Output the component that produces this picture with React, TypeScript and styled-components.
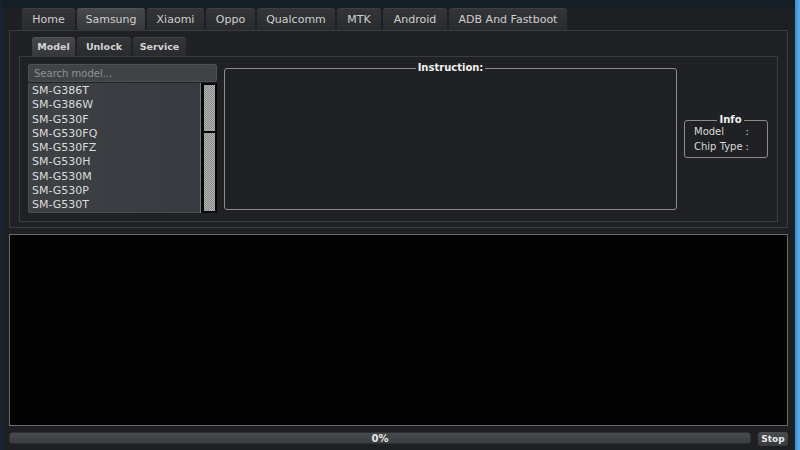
import React from 'react';
import styled, { createGlobalStyle, css } from 'styled-components';

const GlobalStyle = createGlobalStyle`
  html, body {
    margin: 0;
    padding: 0;
    background: #1e1f22;
  }
  * { box-sizing: border-box; }
`;

const uiFont = css`
  font-family: "DejaVu Sans", Verdana, sans-serif;
`;

const Window = styled.div`
  ${uiFont}
  width: 800px;
  height: 450px;
  display: flex;
  overflow: hidden;
  background: #1e1f22;
`;

const Body = styled.div`
  flex: 1;
  display: flex;
  flex-direction: column;
  border-left: 3px solid #172330;
  border-top: 8px solid #151d26;
  padding: 0 7px 0 6px;
`;

const RightEdge = styled.div`
  width: 6px;
  background: linear-gradient(90deg, #3a8fd0, #5aaee8);
`;

const TabBar = styled.div`
  display: flex;
  gap: 2px;
  height: 22px;
  margin-left: 13px;
`;

const Tab = styled.div<{ $active?: boolean; $w: number }>`
  width: ${p => p.$w}px;
  display: flex;
  align-items: center;
  justify-content: center;
  white-space: nowrap;
  font-size: 11px;
  color: #cfcfcf;
  border-radius: 3px 3px 0 0;
  background: ${p => (p.$active
    ? 'linear-gradient(#48494c, #36373a)'
    : 'linear-gradient(#343538, #2a2b2e)')};
  box-shadow: inset 0 1px 0 rgba(255, 255, 255, 0.06);
`;

const MainPanel = styled.div`
  height: 198px;
  border: 1px solid #3a3b3e;
  background: #202124;
  padding: 6px 9px 5px 9px;
  display: flex;
  flex-direction: column;
`;

const SubTabBar = styled.div`
  display: flex;
  gap: 2px;
  height: 19px;
  margin-left: 13px;
`;

const SubTab = styled(Tab)`
  font-size: 9.5px;
  font-weight: bold;
  color: #d4d4d4;
`;

const InnerPanel = styled.div`
  flex: 1;
  border: 1px solid #3a3b3e;
  padding: 7px 9px 8px 8px;
  display: flex;
  align-items: flex-start;
  gap: 7px;
`;

const LeftColumn = styled.div`
  width: 189px;
  display: flex;
  flex-direction: column;
  gap: 1px;
`;

const Search = styled.input`
  ${uiFont}
  height: 18px;
  font-size: 10px;
  color: #ddd;
  padding: 0 5px;
  background: #404346;
  border: 1px solid #4d5054;
  border-radius: 2px;
  outline: none;
  &::placeholder { color: #8d9195; }
`;

const ListBox = styled.div`
  height: 130px;
  display: flex;
`;

const List = styled.div`
  flex: 1;
  padding: 1px 0 0 3px;
  background: linear-gradient(90deg, #3d4044, #373a3e);
  border-radius: 0 0 0 2px;
  border-left: 1px solid #4a4d51;
  border-bottom: 1px solid #4a4d51;
`;

const Item = styled.div`
  font-size: 11px;
  line-height: 14.25px;
  color: #dcdcdc;
`;

const ScrollTrack = styled.div`
  width: 17px;
  background: #050505;
  padding: 2px 2px 2px 3px;
  display: flex;
  flex-direction: column;
  border-left: 1px solid #777;
`;

const Thumb = styled.div<{ $grow: number }>`
  flex: ${p => p.$grow};
  background: repeating-conic-gradient(#8a8a8a 0 25%, #b4b4b4 0 50%) 0 0 / 2px 2px;
  & + & { margin-top: 2px; }
`;

const GroupBox = styled.fieldset<{ $w: number; $h: number }>`
  width: ${p => p.$w}px;
  height: ${p => p.$h}px;
  margin: 0;
  padding: 0 9px;
  border: 1px solid #8c8c8c;
  border-radius: 3px;
  min-width: 0;
`;

const Legend = styled.legend`
  margin: 0 auto;
  padding: 0 2px;
  font-size: 10px;
  font-weight: bold;
  color: #f2f2f2;
  line-height: 10px;
`;

const InstructionBox = styled(GroupBox)`
  margin-top: -1px;
`;

const InfoBox = styled(GroupBox)`
  margin-top: 51px;
  padding: 0 0 0 9px;
`;

const InfoGrid = styled.div`
  display: grid;
  grid-template-columns: max-content max-content;
  column-gap: 3px;
  row-gap: 1px;
  white-space: nowrap;
  font-size: 10px;
  line-height: 14px;
  color: #dadada;
`;

const Log = styled.div`
  height: 192px;
  margin-top: 6px;
  background: #030303;
  border: 1px solid #6a6a6a;
`;

const BottomRow = styled.div`
  display: flex;
  align-items: flex-start;
  gap: 7px;
  margin-top: 6px;
`;

const Progress = styled.div`
  flex: 1;
  height: 12px;
  border-radius: 3px;
  background: linear-gradient(#474a4e, #3a3d41);
  border: 1px solid #2e3033;
  display: flex;
  align-items: center;
  justify-content: center;
  font-size: 10px;
  font-weight: bold;
  color: #e6e6e6;
`;

const StopButton = styled.button`
  ${uiFont}
  width: 30px;
  height: 14px;
  padding: 0;
  font-size: 9px;
  font-weight: bold;
  color: #e8e8e8;
  background: linear-gradient(#4a4c50, #37393c);
  border: none;
  border-radius: 3px;
`;

const tabs: [string, number][] = [
  ['Home', 53], ['Samsung', 68], ['Xiaomi', 57], ['Oppo', 49],
  ['Qualcomm', 78], ['MTK', 44], ['Android', 64], ['ADB And Fastboot', 118],
];
const subTabs: [string, number][] = [['Model', 43], ['Unlock', 54], ['Service', 53]];
const models = ['SM-G386T', 'SM-G386W', 'SM-G530F', 'SM-G530FQ', 'SM-G530FZ', 'SM-G530H', 'SM-G530M', 'SM-G530P', 'SM-G530T'];

const App: React.FC = () => {
  return (
    <>
      <GlobalStyle />
      <Window>
        <Body>
          <TabBar>
            {tabs.map(([t, w]) => (
              <Tab key={t} $w={w} $active={t === 'Samsung'}>{t}</Tab>
            ))}
          </TabBar>

          <MainPanel>
            <SubTabBar>
              {subTabs.map(([t, w]) => (
                <SubTab key={t} $w={w} $active={t === 'Model'}>{t}</SubTab>
              ))}
            </SubTabBar>

            <InnerPanel>
              <LeftColumn>
                <Search placeholder="Search model..." />
                <ListBox>
                  <List>
                    {models.map(m => (
                      <Item key={m}>{m}</Item>
                    ))}
                  </List>
                  <ScrollTrack>
                    <Thumb $grow={46} />
                    <Thumb $grow={78} />
                  </ScrollTrack>
                </ListBox>
              </LeftColumn>

              <InstructionBox $w={453} $h={147}>
                <Legend>Instruction:</Legend>
              </InstructionBox>

              <InfoBox $w={84} $h={43}>
                <Legend>Info</Legend>
                <InfoGrid>
                  <span>Model</span><span>:</span>
                  <span>Chip Type</span><span>:</span>
                </InfoGrid>
              </InfoBox>
            </InnerPanel>
          </MainPanel>

          <Log />

          <BottomRow>
            <Progress>0%</Progress>
            <StopButton>Stop</StopButton>
          </BottomRow>
        </Body>
        <RightEdge />
      </Window>
    </>
  );
};

export default App;
